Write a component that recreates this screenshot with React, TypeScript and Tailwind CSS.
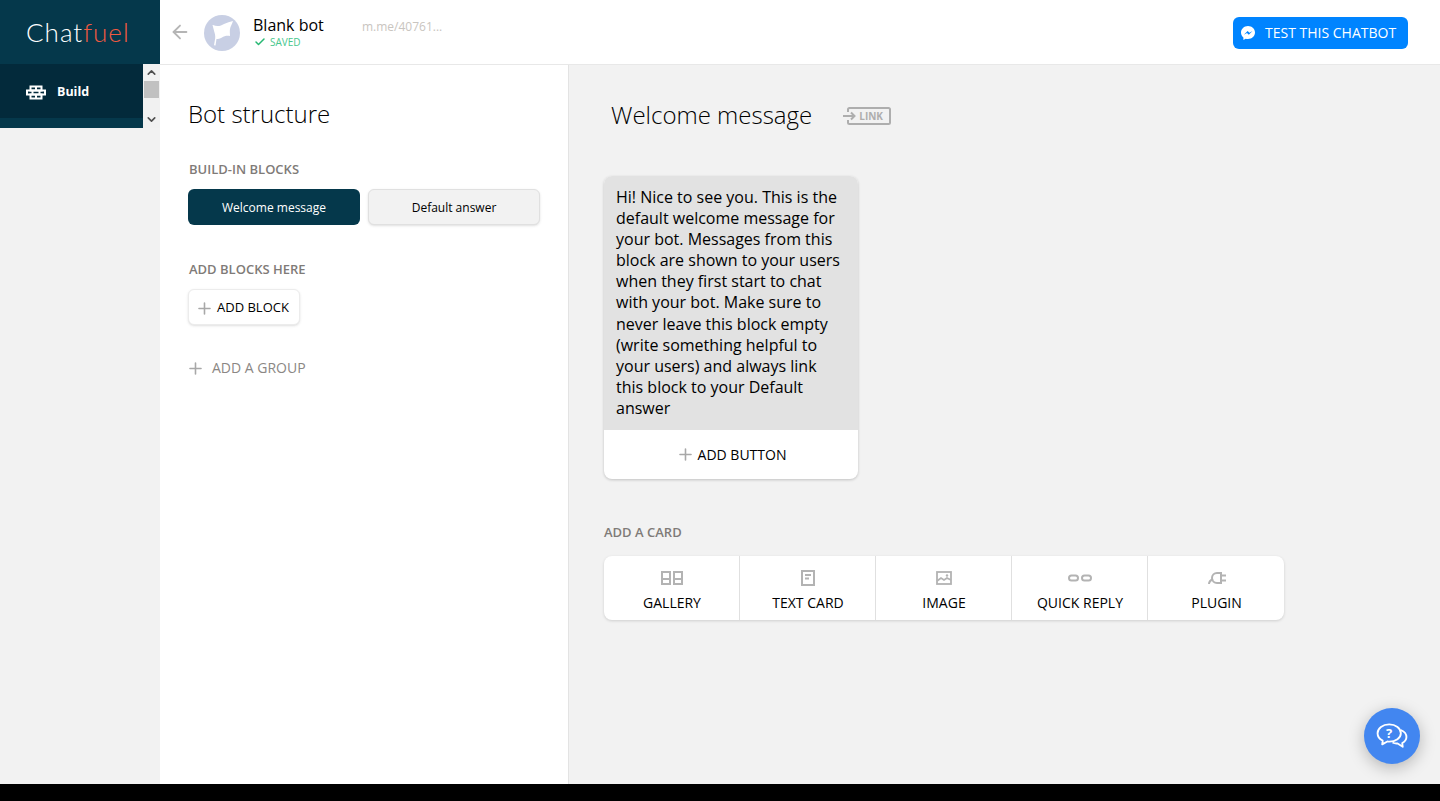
import React from 'react';
import { ArrowLeft, Check, ChevronUp, ChevronDown, Plus } from 'lucide-react';

const FONT = "font-['Open_Sans',sans-serif]";

const BrickIcon = () => (
  <svg width="20" height="15" viewBox="0 0 20 15" fill="none" stroke="#fff" strokeWidth="2">
    <path d="M4.5 1.5h11v4h-11z" />
    <path d="M1 5.5h18v4H1z" />
    <path d="M4.5 9.5h11v4h-11z" />
    <path d="M10 1.5v4M6.5 5.5v4M13.5 5.5v4M10 9.5v4" />
  </svg>
);

const FlagAvatar = () => (
  <div className="w-9 h-9 rounded-full bg-[#c8cfe4]">
    <svg width="36" height="36" viewBox="0 0 36 36">
      <path d="M9 10c4 2 8 1 11-1 3-1.500 6-2.500 9-3-1 3-2.500 5.500-3 8-.4 2.500 0 5 0 7-3-.5-6 0-8 1.500-2 1-4 1.500-5.500 1.500l-1 6.500-1.500-.3 1.200-7c.3-2.700-.4-4.700-1-6.700-.5-2-1-4-1.700-6.500z" fill="#fff" />
    </svg>
  </div>
);

const MessengerIcon = () => (
  <svg width="14" height="14" viewBox="0 0 14 14">
    <path d="M7 0C3.100 0 0 2.900 0 6.600c0 2 .9 3.700 2.400 4.900V14l2.300-1.300c.7.200 1.500.3 2.300.3 3.900 0 7-2.900 7-6.500S10.900 0 7 0z" fill="#fff" />
    <path d="M2.900 8.800 6.600 4.900l1.900 1.900 3-1.900-3.700 3.900-1.800-1.900z" fill="#0084ff" />
  </svg>
);

const LinkIcon = () => (
  <svg width="48" height="18" viewBox="0 0 48 18" fill="none" stroke="#aeaeae" strokeWidth="2">
    <path d="M5 5V2.500A1.500 1.500 0 0 1 6.500 1h39A1.500 1.500 0 0 1 47 2.500v13a1.500 1.500 0 0 1-1.500 1.500h-39A1.500 1.500 0 0 1 5 15.500V13" />
    <path d="M0 9h11M8 5.500 11.500 9 8 12.500" />
  </svg>
);

const GalleryIcon = () => (
  <svg width="22" height="14" viewBox="0 0 22 14" fill="none" stroke="#b3b3b3" strokeWidth="2">
    <rect x="1" y="1" width="8" height="12" />
    <rect x="13" y="1" width="8" height="12" />
    <path d="M1 8h8M13 8h8" />
  </svg>
);

const TextCardIcon = () => (
  <svg width="14" height="16" viewBox="0 0 14 16" fill="none" stroke="#b3b3b3" strokeWidth="2">
    <rect x="1" y="1" width="12" height="14" />
    <path d="M4 5h6M4 8.500h4" />
  </svg>
);

const ImageIcon = () => (
  <svg width="16" height="14" viewBox="0 0 16 14" fill="none" stroke="#b3b3b3" strokeWidth="1.800">
    <rect x="1" y="1" width="14" height="12" />
    <path d="m1 10 4-3 3 2 3-2 4 2" />
    <circle cx="11" cy="4.500" r="1.200" fill="#b3b3b3" stroke="none" />
  </svg>
);

const QuickReplyIcon = () => (
  <svg width="24" height="8" viewBox="0 0 24 8" fill="none" stroke="#b3b3b3" strokeWidth="2">
    <rect x="1" y="1.500" width="9" height="5" rx="2.500" />
    <rect x="14" y="1.500" width="9" height="5" rx="2.500" />
  </svg>
);

const PluginIcon = () => (
  <svg width="18" height="14" viewBox="0 0 18 14" fill="none" stroke="#b3b3b3" strokeWidth="2">
    <path d="M1 13c0-3 2-4 4-5" />
    <path d="M13 2H9a5 5 0 0 0 0 10h4z" />
    <path d="M13 4.500h5M13 9.500h5" />
  </svg>
);

const HelpIcon = () => (
  <svg width="32" height="27" viewBox="0 0 34 29" fill="none" stroke="#fff" strokeWidth="2" strokeLinejoin="round">
    <path d="M14 1.500C7 1.500 1.500 5.500 1.500 11c0 3.500 2 6.300 5.500 8l-.5 4 5.500-3.200c.7.100 1.400.2 2 .2 7 0 12.500-4 12.500-9S21 1.500 14 1.500z" />
    <path d="M26.500 7.500c3.500 1.500 6 4.300 6 7.500 0 2.800-1.800 5-4.500 6.500l.5 4-5.500-3.500c-2 .2-4-.2-5.500-1" />
    <text x="14" y="16" textAnchor="middle" fontSize="14" fontWeight="700" fill="#fff" stroke="none" fontFamily="Open Sans, sans-serif">?</text>
  </svg>
);

const CARDS = [
  { label: 'GALLERY', icon: <GalleryIcon /> },
  { label: 'TEXT CARD', icon: <TextCardIcon /> },
  { label: 'IMAGE', icon: <ImageIcon /> },
  { label: 'QUICK REPLY', icon: <QuickReplyIcon /> },
  { label: 'PLUGIN', icon: <PluginIcon /> },
];

const Sidebar = () => (
  <aside className="w-40 shrink-0 flex flex-col bg-[#f2f2f2]">
    <div className="h-16 bg-[#05384b] flex items-center pl-[26px]">
      <span className="font-['Lato',sans-serif] font-light text-[26px] tracking-[1px] leading-none text-white">
        Chat<span className="text-[#f05a41]">fuel</span>
      </span>
    </div>
    <div className="h-16 flex bg-[#05384b]">
      <div className="w-[143px] h-[54px] bg-[#032a3b] flex items-center pl-[26px] pt-[2px] gap-[11px]">
        <BrickIcon />
        <span className="text-[12.5px] font-bold text-white">Build</span>
      </div>
      <div className="w-[17px] bg-[#f1f1f1] flex flex-col items-center">
        <ChevronUp size={13} strokeWidth={3} className="text-[#505050] mt-[2px]" />
        <div className="w-[15px] h-[17px] bg-[#c1c1c1] mt-[2px]" />
        <div className="flex-1" />
        <ChevronDown size={13} strokeWidth={3} className="text-[#505050] mb-[2px]" />
      </div>
    </div>
  </aside>
);

const Header = () => (
  <header className="h-[65px] shrink-0 bg-white border-b border-[#e8e8e8] flex items-center pt-[2px]">
    <ArrowLeft size={22} strokeWidth={2} className="text-[#b5b5b5] ml-[9px] -mt-[3px]" />
    <div className="ml-[13px] -mt-[1px]">
      <FlagAvatar />
    </div>
    <div className="ml-[13px] w-[109px] -mt-[3px]">
      <div className="text-base leading-[21px] text-black">Blank bot</div>
      <div className="flex items-center gap-[4px] pl-px text-[10px] leading-3 text-[#48c78e]">
        <Check size={12} strokeWidth={3} className="text-[#27b873]" />
        SAVED
      </div>
    </div>
    <span className="text-xs text-[#c9c5c0] -mt-3">m.me/40761...</span>
    <button className="ml-auto mr-8 w-[175px] h-8 rounded-md bg-[#0084ff] flex items-center pl-2 gap-[10px] text-sm text-white">
      <MessengerIcon />
      TEST THIS CHATBOT
    </button>
  </header>
);

const StructurePanel = () => (
  <section className="w-[409px] shrink-0 bg-white border-r border-[#e3e3e3] pl-7 pr-7 pt-8">
    <h1 className="text-2xl font-light leading-[33px] text-black">Bot structure</h1>
    <h2 className="mt-[31px] ml-px text-[13px] font-semibold leading-[16px] text-[#7f7b78]">BUILD-IN BLOCKS</h2>
    <div className="mt-3 flex gap-2">
      <button className="w-[172px] h-9 pt-[2px] rounded-md bg-[#05384b] text-xs text-white">Welcome message</button>
      <button className="w-[172px] h-9 pt-[2px] rounded-md bg-[#f2f2f2] border border-[#e0e0e0] shadow-sm text-xs text-black">Default answer</button>
    </div>
    <h2 className="mt-9 ml-px text-[13px] font-semibold leading-[16px] text-[#7f7b78]">ADD BLOCKS HERE</h2>
    <button className="mt-3 w-28 h-9 pt-[2px] rounded-md bg-white border border-[#ececec] shadow-sm flex items-center pl-[6px] gap-[3px] text-[13px] text-black">
      <Plus size={19} strokeWidth={2} className="text-[#a8a8a8]" />
      ADD BLOCK
    </button>
    <div className="mt-[33px] -ml-[2px] flex items-center gap-[7px] text-sm leading-5 text-[#8b8784]">
      <Plus size={19} strokeWidth={2} className="text-[#a8a8a8]" />
      ADD A GROUP
    </div>
  </section>
);

const EditorPanel = () => (
  <section className="flex-1 relative pl-[35px] pt-8">
    <div className="flex items-center pl-[7px]">
      <h1 className="text-2xl font-light leading-[35px] text-black">Welcome message</h1>
      <div className="relative ml-[31px] mt-[2px] w-12 h-[18px] flex items-center">
        <LinkIcon />
        <span className="absolute left-[16px] top-[3px] text-[10px] leading-3 font-bold text-[#aeaeae]">LINK</span>
      </div>
    </div>

    <div className="mt-11 w-[254px] rounded-lg bg-white shadow-[0_1px_3px_rgba(0,0,0,0.2)] overflow-hidden">
      <p className="bg-[#e2e2e2] px-3 pt-[11px] pb-[11px] text-base leading-[21.1px] text-black">
        Hi! Nice to see you. This is the default welcome message for your bot. Messages from this block are shown to your users when they first start to chat with your bot. Make sure to never leave this block empty (write something helpful to your users) and always link this block to your Default answer
      </p>
      <div className="h-[49px] flex items-center justify-center gap-[3px] text-sm text-black">
        <Plus size={19} strokeWidth={2} className="text-[#a8a8a8]" />
        ADD BUTTON
      </div>
    </div>

    <h2 className="mt-[45px] text-[13px] font-semibold leading-[16px] text-[#7f7b78]">ADD A CARD</h2>
    <div className="mt-4 w-[680px] h-16 rounded-lg bg-white shadow-[0_1px_3px_rgba(0,0,0,0.15)] flex">
      {CARDS.map(card => (
        <div key={card.label} className="w-[136px] pl-px flex flex-col items-center border-r border-[#e0e0e0] last:border-r-0">
          <div className="h-[27px] mt-2 flex items-center justify-center">{card.icon}</div>
          <span className="mt-[2px] text-sm leading-[19px] text-black">{card.label}</span>
        </div>
      ))}
    </div>

    {/* Help bubble */}
    <button className="absolute right-5 bottom-5 w-14 h-14 rounded-full bg-[#4286f0] shadow-[0_4px_16px_rgba(0,0,0,0.25)] flex items-center justify-center">
      <HelpIcon />
    </button>
  </section>
);

const App: React.FC = () => {
  return (
    <div className={`${FONT} h-[801px] bg-black overflow-hidden`}>
      <div className="h-[784px] flex bg-[#f2f2f2]">
        <Sidebar />
        <div className="flex-1 flex flex-col">
          <Header />
          <div className="flex-1 flex">
            <StructurePanel />
            <EditorPanel />
          </div>
        </div>
      </div>
    </div>
  );
};

export default App;
